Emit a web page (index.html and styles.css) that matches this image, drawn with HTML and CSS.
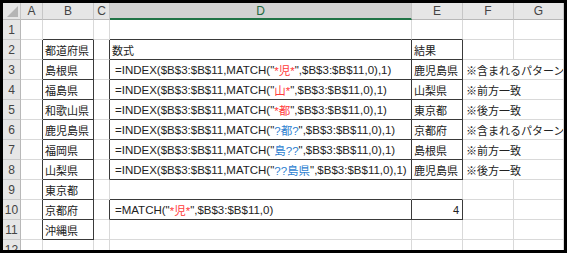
FILE: index.html
```html
<!DOCTYPE html>
<html lang="ja">
<head>
<meta charset="utf-8">
<link rel="stylesheet" href="styles.css">
</head>
<body>
<div class="frame">
  <div class="sheet">
    <div class="hd corner"><span class="tri"></span></div>
    <div class="hd">A</div>
    <div class="hd">B</div>
    <div class="hd">C</div>
    <div class="hd sel">D</div>
    <div class="hd">E</div>
    <div class="hd">F</div>
    <div class="hd">G</div>

    <div class="rh">1</div>
    <div class="c"></div>
    <div class="c db"></div>
    <div class="c"></div>
    <div class="c db"></div>
    <div class="c db"></div>
    <div class="c"></div>
    <div class="c"></div>

    <div class="rh">2</div>
    <div class="c dr"></div>
    <div class="c dr db">都道府県</div>
    <div class="c dr"></div>
    <div class="c dr db">数式</div>
    <div class="c dr db">結果</div>
    <div class="c"></div>
    <div class="c"></div>

    <div class="rh">3</div>
    <div class="c dr"></div>
    <div class="c dr db">島根県</div>
    <div class="c dr"></div>
    <div class="c dr db f">=INDEX($B$3:$B$11,MATCH("<span class="red">*児*</span>",$B$3:$B$11,0),1)</div>
    <div class="c dr db">鹿児島県</div>
    <div class="c nr note">※含まれるパターン</div>
    <div class="c"></div>

    <div class="rh">4</div>
    <div class="c dr"></div>
    <div class="c dr db">福島県</div>
    <div class="c dr"></div>
    <div class="c dr db f">=INDEX($B$3:$B$11,MATCH("<span class="red">山*</span>",$B$3:$B$11,0),1)</div>
    <div class="c dr db">山梨県</div>
    <div class="c nr note">※前方一致</div>
    <div class="c"></div>

    <div class="rh">5</div>
    <div class="c dr"></div>
    <div class="c dr db">和歌山県</div>
    <div class="c dr"></div>
    <div class="c dr db f">=INDEX($B$3:$B$11,MATCH("<span class="red">*都</span>",$B$3:$B$11,0),1)</div>
    <div class="c dr db">東京都</div>
    <div class="c nr note">※後方一致</div>
    <div class="c"></div>

    <div class="rh">6</div>
    <div class="c dr"></div>
    <div class="c dr db">鹿児島県</div>
    <div class="c dr"></div>
    <div class="c dr db f">=INDEX($B$3:$B$11,MATCH("<span class="blue">?都?</span>",$B$3:$B$11,0),1)</div>
    <div class="c dr db">京都府</div>
    <div class="c nr note">※含まれるパターン</div>
    <div class="c"></div>

    <div class="rh">7</div>
    <div class="c dr"></div>
    <div class="c dr db">福岡県</div>
    <div class="c dr"></div>
    <div class="c dr db f">=INDEX($B$3:$B$11,MATCH("<span class="blue">島??</span>",$B$3:$B$11,0),1)</div>
    <div class="c dr db">島根県</div>
    <div class="c nr note">※前方一致</div>
    <div class="c"></div>

    <div class="rh">8</div>
    <div class="c dr"></div>
    <div class="c dr db">山梨県</div>
    <div class="c dr"></div>
    <div class="c dr db f">=INDEX($B$3:$B$11,MATCH("<span class="blue">??島県</span>",$B$3:$B$11,0),1)</div>
    <div class="c dr db">鹿児島県</div>
    <div class="c nr note">※後方一致</div>
    <div class="c"></div>

    <div class="rh">9</div>
    <div class="c dr"></div>
    <div class="c dr db">東京都</div>
    <div class="c"></div>
    <div class="c db"></div>
    <div class="c db"></div>
    <div class="c"></div>
    <div class="c"></div>

    <div class="rh">10</div>
    <div class="c dr"></div>
    <div class="c dr db">京都府</div>
    <div class="c dr"></div>
    <div class="c dr db f">=MATCH("<span class="red">*児*</span>",$B$3:$B$11,0)</div>
    <div class="c dr db num">4</div>
    <div class="c"></div>
    <div class="c"></div>

    <div class="rh">11</div>
    <div class="c dr"></div>
    <div class="c dr db">沖縄県</div>
    <div class="c"></div>
    <div class="c"></div>
    <div class="c"></div>
    <div class="c"></div>
    <div class="c"></div>

    <div class="rh last">12</div>
    <div class="c"></div>
    <div class="c"></div>
    <div class="c"></div>
    <div class="c"></div>
    <div class="c"></div>
    <div class="c"></div>
    <div class="c"></div>
  </div>
</div>
</body>
</html>
```
FILE: styles.css
```css
* { box-sizing: border-box; }
html, body { margin: 0; padding: 0; background: #000; }
.frame {
  width: 567px;
  height: 253px;
  padding: 3px;
  background: #000;
  overflow: hidden;
}
.sheet {
  width: 561px;
  height: 247px;
  overflow: hidden;
  background: #fff;
  display: grid;
  grid-template-columns: 18px 22px 51px 16px 302px 51px 51px 50px;
  grid-template-rows: 17px repeat(11, 20px) 20px;
  font-family: "Liberation Sans", "Noto Sans CJK JP", sans-serif;
  font-size: 11px;
  color: #222;
}
.hd {
  background: #e6e6e6;
  border-right: 1px solid #c6c6c6;
  border-bottom: 1px solid #b8b8b8;
  color: #444;
  font-size: 12px;
  display: flex;
  align-items: center;
  justify-content: center;
}
.hd.sel {
  background: #d2d2d2;
  border-bottom: 2px solid #217346;
  color: #1e6a40;
}
.corner { position: relative; }
.tri {
  position: absolute;
  right: 2px;
  bottom: 2px;
  width: 0;
  height: 0;
  border-left: 11px solid transparent;
  border-bottom: 11px solid #b5b5b5;
}
.rh {
  background: #e6e6e6;
  border-right: 1px solid #b8b8b8;
  border-bottom: 1px solid #c9c9c9;
  color: #444;
  font-size: 12px;
  display: flex;
  align-items: center;
  justify-content: center;
}
.rh.last { align-items: flex-start; padding-top: 3px; }
.c {
  border-right: 1px solid #d9d9d9;
  border-bottom: 1px solid #d9d9d9;
  display: flex;
  align-items: center;
  padding: 0 2px;
  white-space: nowrap;
  overflow: visible;
}
.c.dr { border-right-color: #3a3a3a; }
.c.db { border-bottom-color: #3a3a3a; }
.c.nr { border-right-color: transparent; }
.f { padding-left: 5px; overflow: hidden; font-size: 11.5px; }
.note { padding-left: 3px; overflow: visible; }
.num { justify-content: flex-end; padding-right: 3px; }
.red { color: #ff3b3b; }
.blue { color: #2e7fd0; }
```
